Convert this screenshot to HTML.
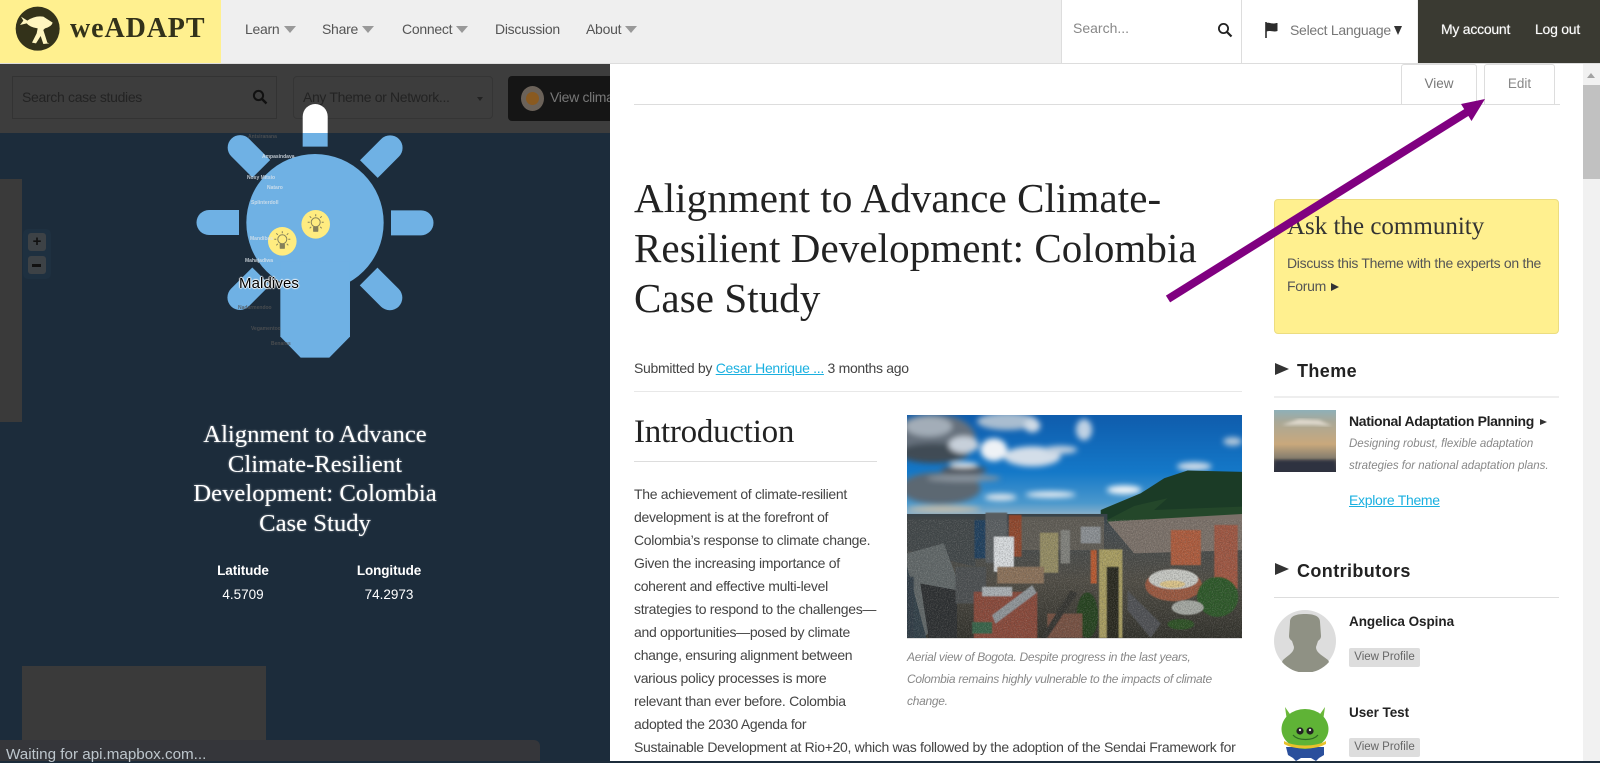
<!DOCTYPE html>
<html lang="en"><head><meta charset="utf-8"><title>weADAPT</title>
<style>
html,body{margin:0;padding:0;width:1600px;height:761px;overflow:hidden;background:#1c2c3b;font-family:"Liberation Sans",sans-serif}
.a{position:absolute}
.t{position:absolute;white-space:nowrap}
.nav{font-size:14px;color:#555;top:20px;line-height:18px;letter-spacing:-.28px}
.tri{position:absolute;top:26px;width:0;height:0;border-left:6.5px solid transparent;border-right:6.5px solid transparent;border-top:7px solid #999}
.h1{font-family:"Liberation Serif",serif;font-size:41px;line-height:50px;color:#222;left:634px;letter-spacing:.08px}
.p{font-size:14px;line-height:23px;color:#444;left:634px}
.cap{font-size:12px;font-style:italic;color:#888;left:907px;line-height:22px}
.btn{position:absolute;left:1349px;width:71px;height:19px;background:#ddd;border-radius:2px;font-size:11.5px;line-height:19px;color:#666;text-align:center}
a{color:#1ab0e0;text-decoration:underline}
</style></head><body>
<div class="a" style="left:0;top:0;width:1600px;height:761px;background:#1c2c3b"></div>

<!-- left map -->
<div class="a" style="left:0;top:179px;width:22px;height:243px;background:#3a3a3a"></div>
<div class="a" style="left:22px;top:666px;width:244px;height:95px;background:#3a3a3a"></div>
<div class="a" style="left:23px;top:229px;width:28px;height:50px;background:#1e3040;border-radius:5px"></div>
<div class="a" style="left:28px;top:233px;width:18px;height:18px;background:#3d4246;border-radius:3px"></div>
<div class="a" style="left:28px;top:256px;width:18px;height:18px;background:#3d4246;border-radius:3px"></div>
<div class="t" style="left:28px;top:233px;width:18px;text-align:center;font:bold 15px/18px 'Liberation Sans',sans-serif;color:#111">+</div>
<div class="a" style="left:32px;top:264px;width:9px;height:2.5px;background:#111"></div>

<svg class="a" style="left:0;top:0" width="610" height="400" viewBox="0 0 610 400">
<g transform="translate(170,95) scale(.33333)">
<g fill="#6fb1e4">
<path d="M398 155V65a37 37 0 0 1 75 0V155z"/>
<path d="M398 155V65a37 37 0 0 1 75 0V155z" transform="rotate(45 435 383)"/>
<path d="M398 155V65a37 37 0 0 1 75 0V155z" transform="rotate(90 435 383)"/>
<path d="M398 155V65a37 37 0 0 1 75 0V155z" transform="rotate(135 435 383)"/>
<path d="M398 155V65a37 37 0 0 1 75 0V155z" transform="rotate(225 435 383)"/>
<path d="M398 155V65a37 37 0 0 1 75 0V155z" transform="rotate(270 435 383)"/>
<path d="M398 155V65a37 37 0 0 1 75 0V155z" transform="rotate(315 435 383)"/>
</g>
<circle cx="435" cy="383" r="206" fill="#6fb1e4"/>
<path d="M331 500H540V725L478 788H392L331 725z" fill="#6fb1e4"/>
</g></svg>

<!-- top overlay -->
<div class="a" style="left:0;top:63px;width:610px;height:70px;background:#3d3d3d"></div>
<div class="a" style="left:12px;top:76px;width:265px;height:43px;border:1px solid #333;box-sizing:border-box"></div>
<div class="t" style="left:22px;top:88px;font-size:14px;line-height:18px;color:#232323;letter-spacing:-.32px">Search case studies</div>
<svg class="a" style="left:252px;top:89px" width="16" height="16" viewBox="0 0 16 16"><circle cx="6.5" cy="6.5" r="4.6" fill="none" stroke="#111" stroke-width="2"/><path d="M10 10l4.5 4.5" stroke="#111" stroke-width="2.4"/></svg>
<div class="a" style="left:293px;top:76px;width:200px;height:43px;border:1px solid #353535;border-radius:4px;box-sizing:border-box"></div>
<div class="t" style="left:303px;top:88px;font-size:14px;line-height:18px;color:#232323;letter-spacing:-.35px">Any Theme or Network...</div>
<div class="a" style="left:477px;top:97px;border-left:3px solid transparent;border-right:3px solid transparent;border-top:4px solid #222"></div>
<svg class="a" style="left:296px;top:100px" width="40" height="36" viewBox="0 0 40 36"><path d="M6.7 33V16.500a12.500 12.500 0 0 1 25 0V33z" fill="#fff"/></svg>
<div class="a" style="left:508px;top:76px;width:102px;height:45px;background:#151515;border-radius:4px 0 0 4px;overflow:hidden">
<div class="a" style="left:13px;top:10px;width:23px;height:25px;border-radius:50%;background:#6b6259"></div>
<div class="a" style="left:18px;top:16px;width:13px;height:13px;border-radius:50%;background:#8a5a20"></div>
<div class="t" style="left:42px;top:12px;font-size:14px;line-height:18px;color:#777;letter-spacing:-.3px">View climate</div>
</div>

<svg class="a" style="left:0;top:0" width="610" height="400" viewBox="0 0 610 400">
<g fill="#ffec80"><circle cx="315.7" cy="224.3" r="14.3"/><circle cx="282.3" cy="241.3" r="14.3"/></g>
<g fill="none" stroke="#85805a" stroke-width="1">
<g transform="translate(315.7,224.3)"><circle cy="-2" r="4.5"/><path d="M-2 3v3h4v-3M0-10v2M-8-2h2M6-2h2M-6-8l1.5 1.5M6-8l-1.5 1.5M-6 4l1.5-1.5M6 4l-1.5-1.5"/><rect x="-2" y="3" width="4" height="4" fill="#85805a"/></g>
<g transform="translate(282.3,241.3)"><circle cy="-2" r="4.5"/><path d="M-2 3v3h4v-3M0-10v2M-8-2h2M6-2h2M-6-8l1.5 1.5M6-8l-1.5 1.5M-6 4l1.5-1.5M6 4l-1.5-1.5"/><rect x="-2" y="3" width="4" height="4" fill="#85805a"/></g>
</g>
<g font-family="Liberation Sans,sans-serif" font-size="5" font-weight="bold" fill="#dfe6ec" opacity=".8">
<text x="248" y="138" fill="#555">Antsiranana</text><text x="262" y="158">Ampasindava</text><text x="247" y="179">Nosy Mitsio</text>
<text x="267" y="189">Nataro</text><text x="251" y="204">Splinterdoll</text><text x="250" y="240">Mandibas</text>
<text x="245" y="262">Mahajadiwa</text>
<text x="238" y="309" fill="#555">Nadarmendoo</text><text x="251" y="330" fill="#555">Vegamentoo</text><text x="271" y="345" fill="#555">Benaras</text>
</g>
</svg>
<div class="t" style="left:239px;top:274px;font:15px/20px 'Liberation Sans',sans-serif;color:#000;letter-spacing:.1px;text-shadow:1px 0 1px #fff,-1px 0 1px #fff,0 1px 1px #fff,0 -1px 1px #fff,0 0 1px #000">Maldives</div>

<div class="t" style="left:100px;width:430px;top:420px;text-align:center;font:24.7px/29.5px 'Liberation Serif',serif;color:#fff;text-shadow:0 0 2px #fff8">Alignment to Advance<br>Climate-Resilient<br>Development: Colombia<br>Case Study</div>
<div class="t" style="left:183px;width:120px;top:562px;text-align:center;font:bold 13.5px/17px 'Liberation Sans',sans-serif;color:#fff;letter-spacing:-.1px">Latitude</div>
<div class="t" style="left:183px;width:120px;top:586px;text-align:center;font:13.5px/17px 'Liberation Sans',sans-serif;color:#fff">4.5709</div>
<div class="t" style="left:329px;width:120px;top:562px;text-align:center;font:bold 13.5px/17px 'Liberation Sans',sans-serif;color:#fff;letter-spacing:-.1px">Longitude</div>
<div class="t" style="left:329px;width:120px;top:586px;text-align:center;font:13.5px/17px 'Liberation Sans',sans-serif;color:#fff">74.2973</div>

<div class="a" style="left:0;top:740px;width:540px;height:21px;background:#35363a;border-radius:0 6px 0 0"></div>
<div class="t" style="left:6px;top:746px;font-size:15.2px;line-height:17px;color:#bdc6cc">Waiting for api.mapbox.com...</div>

<!-- right panel -->
<div class="a" style="left:610px;top:63px;width:973px;height:698px;background:#fff"></div>
<div class="a" style="left:1583px;top:63px;width:17px;height:698px;background:#f1f1f1"></div>
<div class="a" style="left:1583px;top:85px;width:17px;height:94px;background:#c1c1c1"></div>
<div class="a" style="left:1587px;top:73px;border-left:4.5px solid transparent;border-right:4.5px solid transparent;border-bottom:5px solid #a3a3a3"></div>

<!-- header -->
<div class="a" style="left:0;top:0;width:1600px;height:63px;background:#efefef;border-bottom:1px solid #ddd;box-sizing:content-box"></div>
<div class="a" style="left:0;top:0;width:221px;height:63px;background:#fff08f"></div>
<svg class="a" style="left:10px;top:0" width="60" height="60" viewBox="0 0 180 180">
<ellipse cx="83" cy="86" rx="66" ry="66" fill="#33321a"/>
<path d="M33 50L52 62Q75 46 100 50L128 68Q125 80 105 85L100 90L112 128L118 130L100 132L92 108L78 130L66 128L80 100L83 85Q60 82 50 70L30 75L40 62z" fill="#fff6c0"/>
</svg>
<div class="t" style="left:70px;top:13px;font:bold 28px/32px 'Liberation Serif',serif;color:#33321a;letter-spacing:.9px">weADAPT</div>
<div class="t nav" style="left:245px">Learn</div><div class="tri" style="left:284px"></div>
<div class="t nav" style="left:322px">Share</div><div class="tri" style="left:362px"></div>
<div class="t nav" style="left:402px">Connect</div><div class="tri" style="left:456px"></div>
<div class="t nav" style="left:495px">Discussion</div>
<div class="t nav" style="left:586px">About</div><div class="tri" style="left:625px"></div>

<div class="a" style="left:1061px;top:0;width:181px;height:63px;background:#fff;border-left:1px solid #ddd;border-right:1px solid #ddd;box-sizing:border-box"></div>
<div class="t" style="left:1073px;top:19px;font-size:14px;line-height:18px;color:#888">Search...</div>
<svg class="a" style="left:1217px;top:22px" width="16" height="16" viewBox="0 0 16 16"><circle cx="6.5" cy="6.5" r="4.6" fill="none" stroke="#222" stroke-width="1.8"/><path d="M10 10l4.5 4.5" stroke="#222" stroke-width="2.2"/></svg>
<div class="a" style="left:1242px;top:0;width:175px;height:63px;background:#fff"></div>
<svg class="a" style="left:1264px;top:21px" width="16" height="18" viewBox="0 0 16 18"><path d="M2 1v16" stroke="#2c2c2c" stroke-width="1.6"/><path d="M2.5 2c3-1 5 1.500 10 0l1 0v8c-4 1.500-7-1-11 .5z" fill="#2c2c2c"/></svg>
<div class="t" style="left:1290px;top:21px;font-size:14px;line-height:18px;color:#777;letter-spacing:-.28px">Select Language</div>
<div class="a" style="left:1394px;top:26px;border-left:4.500px solid transparent;border-right:4.500px solid transparent;border-top:9px solid #333"></div>
<div class="a" style="left:1418px;top:0;width:182px;height:63px;background:#3a3a32"></div>
<div class="t" style="left:1441px;top:20px;font-size:14px;line-height:18px;color:#fff;letter-spacing:-.25px;text-shadow:0 0 1px #fff8">My account</div>
<div class="t" style="left:1535px;top:20px;font-size:14px;line-height:18px;color:#fff;letter-spacing:-.25px;text-shadow:0 0 1px #fff8">Log out</div>

<!-- tabs -->
<div class="a" style="left:1401px;top:64px;width:76px;height:41px;background:#fff;border:1px solid #ddd;border-bottom:none;border-radius:3px 3px 0 0;box-sizing:border-box"></div>
<div class="a" style="left:1484px;top:64px;width:71px;height:40px;background:#fff;border:1px solid #ddd;border-bottom:none;border-radius:3px 3px 0 0;box-sizing:border-box"></div>
<div class="a" style="left:634px;top:104px;width:926px;height:1px;background:#ddd"></div>
<div class="t" style="left:1401px;width:76px;text-align:center;top:75px;font-size:13.5px;line-height:18px;color:#777">View</div>
<div class="t" style="left:1484px;width:71px;text-align:center;top:75px;font-size:13.5px;line-height:18px;color:#888">Edit</div>

<!-- article -->
<div class="t h1" style="top:173px">Alignment to Advance Climate-</div>
<div class="t h1" style="top:223px">Resilient Development: Colombia</div>
<div class="t h1" style="top:273px">Case Study</div>
<div class="t" style="left:634px;top:359px;font-size:14px;line-height:18px;color:#444;letter-spacing:-.3px">Submitted by <a>Cesar Henrique ...</a> 3 months ago</div>
<div class="a" style="left:634px;top:391px;width:608px;height:1px;background:#e8e8e8"></div>
<div class="t" style="left:634px;top:412px;font:33px/40px 'Liberation Serif',serif;color:#222;letter-spacing:-.25px">Introduction</div>
<div class="a" style="left:634px;top:461px;width:243px;height:1px;background:#ddd"></div>
<div class="t p" style="top:483px;letter-spacing:-.31px">The achievement of climate-resilient<br>development is at the forefront of<br>Colombia’s response to climate change.<br>Given the increasing importance of<br>coherent and effective multi-level<br>strategies to respond to the challenges—<br>and opportunities—posed by climate<br>change, ensuring alignment between<br>various policy processes is more<br>relevant than ever before. Colombia<br>adopted the 2030 Agenda for<br>Sustainable Development at Rio+20, which was followed by the adoption of the Sendai Framework for</div>

<!-- photo -->
<svg class="a" style="left:907px;top:415px" width="335" height="223" viewBox="20 16 1003 667" preserveAspectRatio="none">
<defs>
<linearGradient id="sky" x1="0" y1="0" x2="0" y2="1"><stop offset="0" stop-color="#0f5cac"/><stop offset=".55" stop-color="#1478c8"/><stop offset=".85" stop-color="#4b98cc"/><stop offset="1" stop-color="#9fb8c8"/></linearGradient>
<linearGradient id="gnd" x1="0" y1="0" x2="0" y2="1"><stop offset="0" stop-color="#3f474c"/><stop offset=".5" stop-color="#4d4a42"/><stop offset="1" stop-color="#2e2e28"/></linearGradient>
<filter id="b6" x="-30%" y="-50%" width="160%" height="200%"><feGaussianBlur stdDeviation="9"/></filter>
<filter id="b2"><feGaussianBlur stdDeviation="1.500"/></filter>
<filter id="n" x="0" y="0" width="100%" height="100%"><feTurbulence type="fractalNoise" baseFrequency=".3" numOctaves="2" seed="4"/><feColorMatrix values="0 0 0 0 .95  0 0 0 0 .9  0 0 0 0 .85  2.4 0 0 0 -1.05"/></filter>
<filter id="nd" x="0" y="0" width="100%" height="100%"><feTurbulence type="fractalNoise" baseFrequency=".25" numOctaves="2" seed="9"/><feColorMatrix values="0 0 0 0 .05  0 0 0 0 .05  0 0 0 0 .05  2.6 0 0 0 -1.05"/></filter>
<clipPath id="pc"><rect x="20" y="16" width="1003" height="667"/></clipPath>
</defs>
<g clip-path="url(#pc)">
<rect x="20" y="16" width="1003" height="310" fill="url(#sky)"/>
<g filter="url(#b6)">
<ellipse cx="100" cy="85" rx="125" ry="72" fill="#66717d"/>
<ellipse cx="120" cy="235" rx="120" ry="48" fill="#5c6772"/>
<ellipse cx="85" cy="50" rx="70" ry="30" fill="#a3adb8"/>
<ellipse cx="100" cy="130" rx="105" ry="30" fill="#414b55"/>
<ellipse cx="190" cy="105" rx="45" ry="25" fill="#c7d0da"/>
<ellipse cx="280" cy="120" rx="40" ry="34" fill="#eef2f6"/>
<ellipse cx="395" cy="140" rx="85" ry="30" fill="#d3dee9"/>
<ellipse cx="480" cy="120" rx="50" ry="12" fill="#bfcfdf"/>
<ellipse cx="190" cy="182" rx="68" ry="16" fill="#4f5760"/>
<ellipse cx="190" cy="165" rx="42" ry="7" fill="#f0f3f6"/>
<ellipse cx="320" cy="35" rx="90" ry="26" fill="#a9bdd0"/>
<ellipse cx="395" cy="48" rx="24" ry="20" fill="#d0dbe6"/>
<ellipse cx="550" cy="60" rx="24" ry="32" fill="#bfd2e4"/>
<ellipse cx="190" cy="205" rx="110" ry="10" fill="#8a949e"/>
<ellipse cx="300" cy="262" rx="48" ry="10" fill="#dfe6ec"/>
<ellipse cx="450" cy="254" rx="75" ry="9" fill="#edf1f4"/>
<ellipse cx="670" cy="240" rx="52" ry="13" fill="#f3f6f8"/>
<ellipse cx="880" cy="170" rx="52" ry="13" fill="#cfdce8"/>
<ellipse cx="995" cy="95" rx="28" ry="13" fill="#b2c8db"/>
<ellipse cx="130" cy="298" rx="110" ry="9" fill="#cdbfa8"/>
</g>
<path d="M600 300L720 250 790 205 860 182 1023 186V345H600z" fill="#1b3b26"/>
<path d="M610 335L700 288 800 265 760 300 1023 290V345z" fill="#24472a"/>
<rect x="20" y="312" width="600" height="60" fill="#394349"/>
<rect x="20" y="340" width="1003" height="343" fill="url(#gnd)"/>
<path d="M620 335L1023 312V420L700 430z" fill="#7a7068"/>
<path d="M360 320H610V420H360z" fill="#5d5a53"/>
<path d="M20 320H225V470L20 420z" fill="#3f4547"/>
<path d="M20 430L130 400 190 560 70 683H20z" fill="#5f6667"/>
<path d="M20 470L78 683H20z" fill="#2f3e47"/>
<path d="M60 520L170 540 170 683 85 683z" fill="#2a2d2f"/>
<g filter="url(#b2)">
<rect x="222" y="330" width="45" height="115" fill="#1e3d5c"/>
<rect x="255" y="308" width="65" height="150" fill="#585d61"/>
<rect x="325" y="315" width="38" height="125" fill="#8f4529"/>
<rect x="280" y="380" width="60" height="105" fill="#d9dde0"/>
<rect x="418" y="368" width="55" height="120" fill="#948c62"/>
<rect x="480" y="360" width="28" height="100" fill="#80817c"/>
<rect x="165" y="470" width="92" height="110" fill="#4a4d4f"/>
<rect x="290" y="470" width="140" height="50" fill="#8a7058"/>
<rect x="220" y="545" width="190" height="140" fill="#884639"/>
<path d="M275 615L395 525 408 548 285 640z" fill="#8f9599"/>
<rect x="245" y="530" width="90" height="28" fill="#aab0b4"/>
<rect x="595" y="418" width="70" height="265" fill="#a99e60"/>
<rect x="618" y="470" width="36" height="213" fill="#26261f"/>
<rect x="570" y="420" width="18" height="100" fill="#b9582f"/>
<rect x="540" y="350" width="60" height="50" fill="#8a8f93"/>
<rect x="810" y="360" width="90" height="105" fill="#ad5a3b"/>
<rect x="940" y="345" width="70" height="190" fill="#9e5541"/>
<ellipse cx="818" cy="525" rx="85" ry="48" fill="#99563e"/>
<ellipse cx="818" cy="507" rx="74" ry="30" fill="#c7c9c4"/>
<ellipse cx="815" cy="522" rx="38" ry="11" fill="#dcc488"/>
<ellipse cx="950" cy="560" rx="62" ry="60" fill="#2a5725"/>
<ellipse cx="560" cy="615" rx="32" ry="68" fill="#21401c"/>
<ellipse cx="860" cy="592" rx="48" ry="22" fill="#a4a8a2"/>
<rect x="440" y="610" width="105" height="73" fill="#75503f"/>
<rect x="215" y="635" width="60" height="35" fill="#356246"/>
<ellipse cx="840" cy="642" rx="40" ry="16" fill="#2a4f24"/>
<path d="M420 683L510 540 530 550 440 683z" fill="#33332f"/>
<path d="M680 540L780 640 750 683 680 600z" fill="#4d5052"/>
<rect x="20" y="500" width="20" height="183" fill="#2e3b45"/>
</g>
<rect x="20" y="330" width="1003" height="353" filter="url(#n)" opacity=".22"/>
<rect x="20" y="330" width="1003" height="353" filter="url(#nd)" opacity=".3"/>
</g>
</svg>
<div class="a" style="left:907px;top:638px;width:335px;height:1px;background:#ddd"></div>
<div class="t cap" style="top:646px;letter-spacing:-.3px">Aerial view of Bogota. Despite progress in the last years,<br>Colombia remains highly vulnerable to the impacts of climate<br>change.</div>

<!-- sidebar -->
<div class="a" style="left:1274px;top:199px;width:285px;height:135px;background:#fff08f;border:1px solid #ecdd80;border-radius:4px;box-sizing:border-box"></div>
<div class="t" style="left:1287px;top:212px;font:25px/30px 'Liberation Serif',serif;color:#333">Ask the community</div>
<div class="t" style="left:1287px;top:252px;font-size:14px;line-height:23px;color:#555;letter-spacing:-.3px">Discuss this Theme with the experts on the<br>Forum <span style="display:inline-block;width:0;height:0;border-left:8px solid #333;border-top:4.500px solid transparent;border-bottom:4.500px solid transparent;margin-left:1px"></span></div>
<div class="a" style="left:1275px;top:363px;border-left:14px solid #333;border-top:6.500px solid transparent;border-bottom:6.500px solid transparent"></div>
<div class="t" style="left:1297px;top:360px;font:bold 18px/22px 'Liberation Sans',sans-serif;color:#222;letter-spacing:.4px">Theme</div>
<div class="a" style="left:1274px;top:396px;width:285px;height:2px;background:#eee"></div>

<svg class="a" style="left:1274px;top:410px" width="62" height="62" viewBox="0 0 62 62"><defs><linearGradient id="th" x1="0" y1="0" x2="0" y2="1"><stop offset="0" stop-color="#8fb0b8"/><stop offset=".18" stop-color="#a8a898"/><stop offset=".55" stop-color="#c9a87c"/><stop offset=".75" stop-color="#8c8270"/><stop offset="1" stop-color="#2a3038"/></linearGradient><filter id="tb"><feGaussianBlur stdDeviation="1.500"/></filter></defs><rect width="62" height="62" fill="url(#th)"/><path d="M8 15L25 9 45 10 58 16 40 15z" fill="#ded8cc" filter="url(#tb)"/><rect y="50" width="62" height="12" fill="#2e3340" filter="url(#tb)"/></svg>
<div class="t" style="left:1349px;top:413px;font:bold 14px/17px 'Liberation Sans',sans-serif;color:#222;letter-spacing:-.35px">National Adaptation Planning</div>
<div class="a" style="left:1540px;top:419px;border-left:7px solid #333;border-top:3.500px solid transparent;border-bottom:3.500px solid transparent"></div>
<div class="t" style="left:1349px;top:433px;font-size:11.500px;font-style:italic;line-height:22px;color:#888;letter-spacing:-.03px">Designing robust, flexible adaptation<br>strategies for national adaptation plans.</div>
<div class="t" style="left:1349px;top:491px;font-size:14px;line-height:18px;letter-spacing:-.3px"><a>Explore Theme</a></div>

<div class="a" style="left:1275px;top:563px;border-left:14px solid #333;border-top:6.500px solid transparent;border-bottom:6.500px solid transparent"></div>
<div class="t" style="left:1297px;top:560px;font:bold 18px/22px 'Liberation Sans',sans-serif;color:#222;letter-spacing:.4px">Contributors</div>
<div class="a" style="left:1274px;top:597px;width:285px;height:1px;background:#ddd"></div>

<svg class="a" style="left:1274px;top:610px" width="62" height="62" viewBox="0 0 62 62"><circle cx="31" cy="31" r="31" fill="#ddd"/><path d="M16 12C16 6 22 4 31 4S46 6 46 12L47 26C47 29 45 30 44 31L42 37C42 42 46 44 54 50L55 52A31 31 0 0 1 8 52L9 50C16 44 20 42 20 37L18 31C17 30 15 29 15 26Z" fill="#8f9184"/></svg>
<div class="t" style="left:1349px;top:613px;font:bold 13.500px/17px 'Liberation Sans',sans-serif;color:#222;letter-spacing:-.05px">Angelica Ospina</div>
<div class="btn" style="top:648px">View Profile</div>

<svg class="a" style="left:1280px;top:705px" width="52" height="56" viewBox="0 0 52 56"><path d="M5 2l7 10h26l7-10-2 14H7z" fill="#6cb83a"/><path d="M6 42h38v8l-5 3-3 3-5-3h-10l-5 3-3-3-5-3z" fill="#2a4f9c"/><ellipse cx="25" cy="24" rx="23.500" ry="20" fill="#5fb336"/><path d="M4 36c10 6 32 6 42 0v3c-10 6-32 6-42 0z" fill="#e8c12c"/><circle cx="20" cy="26" r="3.600" fill="#222"/><circle cx="30" cy="26" r="3.600" fill="#222"/><circle cx="20" cy="25" r="1.200" fill="#ddd"/><circle cx="30" cy="25" r="1.200" fill="#ddd"/><path d="M13 30c5 6 20 6 25 0" fill="none" stroke="#2e6a22" stroke-width="1.200"/></svg>
<div class="t" style="left:1349px;top:704px;font:bold 13.500px/17px 'Liberation Sans',sans-serif;color:#222;letter-spacing:-.05px">User Test</div>
<div class="btn" style="top:738px">View Profile</div>

<!-- arrow -->
<svg class="a" style="left:0;top:0;pointer-events:none" width="1600" height="761" viewBox="0 0 1600 761"><path d="M1168 299L1472 109" stroke="#800080" stroke-width="8" fill="none"/><path d="M1485 99L1461 104 1471.500 121z" fill="#800080"/></svg>
</body></html>
